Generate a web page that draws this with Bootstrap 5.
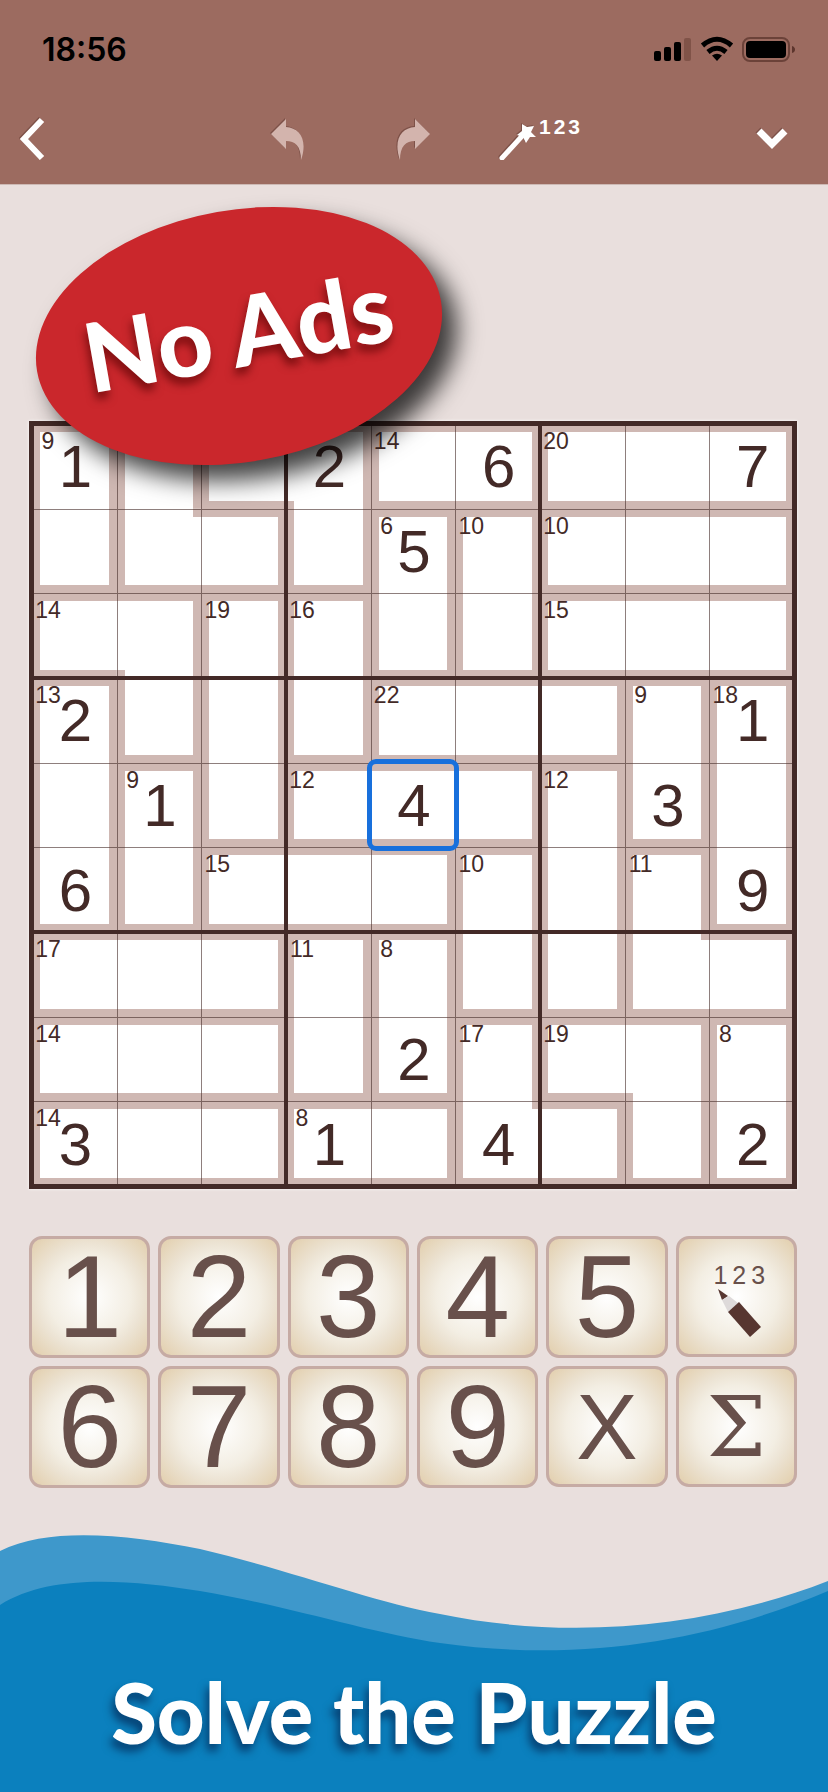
<!DOCTYPE html>
<html lang="en">
<head>
<meta charset="utf-8">
<meta name="viewport" content="width=device-width, initial-scale=1">
<title>Killer Sudoku</title>
<link href="https://cdn.jsdelivr.net/npm/bootstrap@5.3.0/dist/css/bootstrap.min.css" rel="stylesheet">
<style>
  :root { --ink: #432a27; --band: #cfb8b3; --paper: #e9dfdd; --bar: #9c6b60; --blue: #0b80be; }
  body { background: var(--paper); font-family: "Liberation Sans", Arial, sans-serif; color: var(--ink); overflow-x: hidden; }
  .topbar { background: var(--bar); height: 184px; box-shadow: 0 1px 0 #cdb9b4; }
  .statusbar { height: 98px; padding: 34px 32px 0 42px; }
  .clock { font: 600 32px/32px Inter, sans-serif; color: #000; }
  .tools { display: grid; grid-template-columns: 208px 147px 124px 1fr auto; height: 86px; padding: 0 33px 4px 14px; }
  .tool { background: none; border: 0; padding: 6px; text-align: left; line-height: 1; color: #fff; }
  .tool svg { display: block; filter: drop-shadow(-1px -1px 0 rgba(70,35,28,.35)); }
  .play { padding: 237px 31px 34px 29px; }
  .board { aspect-ratio: 1; display: grid; grid-template-columns: repeat(3, 1fr); border: 3px solid var(--ink); box-shadow: 0 0 3px #fff; }
  .block { position: relative; display: grid; grid-template: repeat(3, 1fr) / repeat(3, 1fr); }
  .block::after { content: ""; position: absolute; inset: 0; border: 2px solid var(--ink); pointer-events: none; }
  .cell { position: relative; border: 0; padding: 2px 0 0 2px; background: #fff; color: var(--ink); font-size: 60px; line-height: 1; display: flex; align-items: center; justify-content: center; min-width: 0; min-height: 0; }
  .cell::before { content: ""; position: absolute; inset: 0; border: solid rgba(67,42,39,.6); border-width: 1px 0 0 1px; }
  .sum { position: absolute; left: 2px; top: 6px; width: 28px; text-align: center; font-size: 23px; line-height: 23px; }
  .picked::after { content: ""; position: absolute; inset: -4px; border: 5px solid #1870dc; border-radius: 9px; z-index: 3; }
  .raised { z-index: 2; }
  .sticker { position: absolute; left: 34px; top: 26px; width: 410px; height: 252px; border-radius: 50%; background: #ca272c; transform: rotate(-10deg); box-shadow: 12px 18px 24px rgba(0,0,0,.75); z-index: 5; }
  .slogan { font-family: Lato, "Liberation Sans", sans-serif; font-weight: 900; color: #fff; white-space: nowrap; line-height: 1; text-shadow: -3px 7px 9px rgba(0,0,40,.5); }
  .sticker .slogan { font-size: 96px; padding-bottom: 12px; text-shadow: -3px 7px 9px rgba(80,0,0,.6); }
  .keys { display: grid; grid-template-columns: repeat(6, 1fr); gap: 8px; margin-top: 47px; }
  .key { aspect-ratio: 1; min-width: 0; padding: 0; border: 3px solid #c6aba4; border-radius: 13px; background: radial-gradient(circle, #fff 0, #f3eee3 50%, #ece3d3 66%, #e2ceac 100%); color: #68504b; font-size: 116px; line-height: 1; display: flex; flex-direction: column; align-items: center; justify-content: center; }
  .key-letter { font-size: 92px; }
  .key-sigma { font: 84px/1 "DejaVu Serif", serif; }
  .key-notes { padding: 8px 0 0 6px; }
  .notes { font-size: 25px; line-height: 25px; letter-spacing: 5px; margin-right: -5px; }
  .tool .notes { font-size: 21px; line-height: 18px; font-weight: 700; letter-spacing: 3px; }
  .wave { display: block; width: 100%; height: 132px; }
  .promo { background: var(--blue); padding-bottom: 23px; }
  .promo .slogan { font-size: 83px; line-height: 114px; }
</style>
</head>
<body class="d-flex flex-column min-vh-100">
<header class="topbar">
  <div class="statusbar d-flex justify-content-between align-items-start">
    <span class="clock">18:56</span>
    <svg width="142" height="30" viewBox="0 0 142 30" aria-hidden="true">
      <rect x="0" y="17" width="7" height="10" rx="2"/><rect x="10" y="13" width="7" height="14" rx="2"/>
      <rect x="20" y="8" width="7" height="19" rx="2"/><rect x="30" y="4" width="7" height="23" rx="2" fill="#805348"/>
      <g fill="none" stroke="#000" stroke-width="5"><path d="M48.500 11.500Q63 -1 77.500 11.500"/><path d="M54 18Q63 10.500 72 18"/></g>
      <path d="M58 21.500Q63 18 68 21.500L63 27Z"/>
      <rect x="89" y="4" width="46" height="23" rx="7" fill="none" stroke="#6b4239" stroke-width="2"/>
      <rect x="92" y="7" width="40" height="17" rx="4"/><path d="M138 12Q141 13 141 15.500T138 19Z" fill="#5d352d"/>
    </svg>
  </div>
  <nav class="tools align-items-center" aria-label="Game tools">
    <button class="tool" aria-label="Back"><svg width="26" height="42" viewBox="0 0 26 42"><path d="M22 2L4 21L22 40" fill="none" stroke="#fff" stroke-width="6"/></svg></button>
    <button class="tool ps-5" aria-label="Undo"><svg width="38" height="42" viewBox="0 0 38 42" fill="#d3b4ad"><path d="M1 16L16 1V9C30 10 38 22 31 42C31 28 25 23 16 23V31Z"/></svg></button>
    <button class="tool ps-4" aria-label="Redo"><svg width="38" height="42" viewBox="0 0 38 42" fill="#d3b4ad"><path d="M37 16L22 1V9C8 10 0 22 7 42C7 28 13 23 22 23V31Z"/></svg></button>
    <button class="tool d-flex" aria-label="Fill notes 123"><svg width="40" height="42" viewBox="0 0 40 42" fill="#fff"><path d="M3 40L24 17" stroke="#fff" stroke-width="5" stroke-linecap="round"/><path d="M23 6L28 9L35 8L32 14L37 19L31 19L27 25L24 19L18 17L23 13Z"/></svg><span class="notes">123</span></button>
    <button class="tool" aria-label="Menu"><svg width="34" height="24" viewBox="0 0 34 24"><path d="M4 4L17 17L30 4" fill="none" stroke="#fff" stroke-width="7"/></svg></button>
  </nav>
</header>
<main class="play position-relative">
  <div class="sticker d-flex align-items-center justify-content-center"><span class="slogan">No Ads</span></div>
  <div class="board" id="board" role="group" aria-label="Puzzle"></div>
  <div class="keys">
    <button class="key">1</button><button class="key">2</button><button class="key">3</button><button class="key">4</button><button class="key">5</button>
    <button class="key key-notes" aria-label="Pencil notes 123"><span class="notes">123</span><svg width="46" height="50" viewBox="0 0 46 50"><path d="M2 1L12 8L6 12Z" fill="#573630"/><path d="M6 12L13 8L22 15L12 24Z" fill="#dedada"/><path d="M23 14L45 39L34 49L12 24Z" fill="#573630"/></svg></button>
    <button class="key">6</button><button class="key">7</button><button class="key">8</button><button class="key">9</button>
    <button class="key key-letter">X</button><button class="key key-sigma">Σ</button>
  </div>
</main>
<footer class="mt-auto">
  <svg class="wave" viewBox="0 0 828 132" preserveAspectRatio="none" aria-hidden="true">
    <path d="M0 28C50 3 130 12 200 26C290 47 370 78 440 91C560 116 700 108 828 58V132H0Z" fill="#3e98cb"/>
    <path d="M0 82C50 50 130 57 200 68C290 83 370 110 440 120C580 140 710 118 828 68V132H0Z" fill="#0b80be"/>
  </svg>
  <div class="promo text-center"><span class="slogan d-block">Solve the Puzzle</span></div>
</footer>
<script>
  // One letter per cage, one row per line.
  const cages = ["ABCCDDEEE", "ABBCFGHHH", "JJKLFGIII", "MJKLNNNOP", "MQKRRRSOP", "MQTTTUSVP", "WWWXYUSVV", "ZZZXYabbc", "dddeeaabc"];
  const digits = ["1..2.6..7", "....5....", ".........", "2.......1", ".1..4..3.", "6.......9", ".........", "....2....", "3..1.4..2"];
  const sums = { A: 9, D: 14, E: 20, F: 6, G: 10, H: 10, I: 15, J: 14, K: 19, L: 16, M: 13, N: 22, O: 9, P: 18, Q: 9, R: 12, S: 12, T: 15, U: 10, V: 11, W: 17, X: 11, Y: 8, Z: 14, a: 17, b: 19, c: 8, d: 14, e: 8 };
  const board = document.getElementById("board");
  const blocks = Array.from({ length: 9 }, () => {
    const b = document.createElement("div");
    b.className = "block";
    board.append(b);
    return b;
  });
  const seen = new Set();
  const bands = [[-1, 0, "top", "100% 8px"], [1, 0, "bottom", "100% 8px"], [0, -1, "left", "8px 100%"], [0, 1, "right", "8px 100%"],
    [-1, -1, "left top", "8px 8px"], [-1, 1, "right top", "8px 8px"], [1, -1, "left bottom", "8px 8px"], [1, 1, "right bottom", "8px 8px"]];
  for (let r = 0; r < 9; r++) for (let c = 0; c < 9; c++) {
    const id = cages[r][c];
    const cell = document.createElement("button");
    cell.className = "cell";
    const layers = bands.filter(([y, x]) => (cages[r + y] || "")[c + x] !== id)
      .map(([, , pos, size]) => `linear-gradient(var(--band), var(--band)) ${pos} / ${size} no-repeat`);
    cell.style.background = [...layers, "#fff"].join(",");
    cell.textContent = digits[r][c] === "." ? "" : digits[r][c];
    if (!seen.has(id) && sums[id]) {
      const s = document.createElement("span");
      s.className = "sum";
      s.textContent = sums[id];
      cell.append(s);
    }
    seen.add(id);
    const block = blocks[Math.floor(r / 3) * 3 + Math.floor(c / 3)];
    if (r === 4 && c === 4) { cell.classList.add("picked"); block.classList.add("raised"); }
    block.append(cell);
  }
</script>
<script src="https://cdn.jsdelivr.net/npm/bootstrap@5.3.0/dist/js/bootstrap.bundle.min.js"></script>
</body>
</html>
